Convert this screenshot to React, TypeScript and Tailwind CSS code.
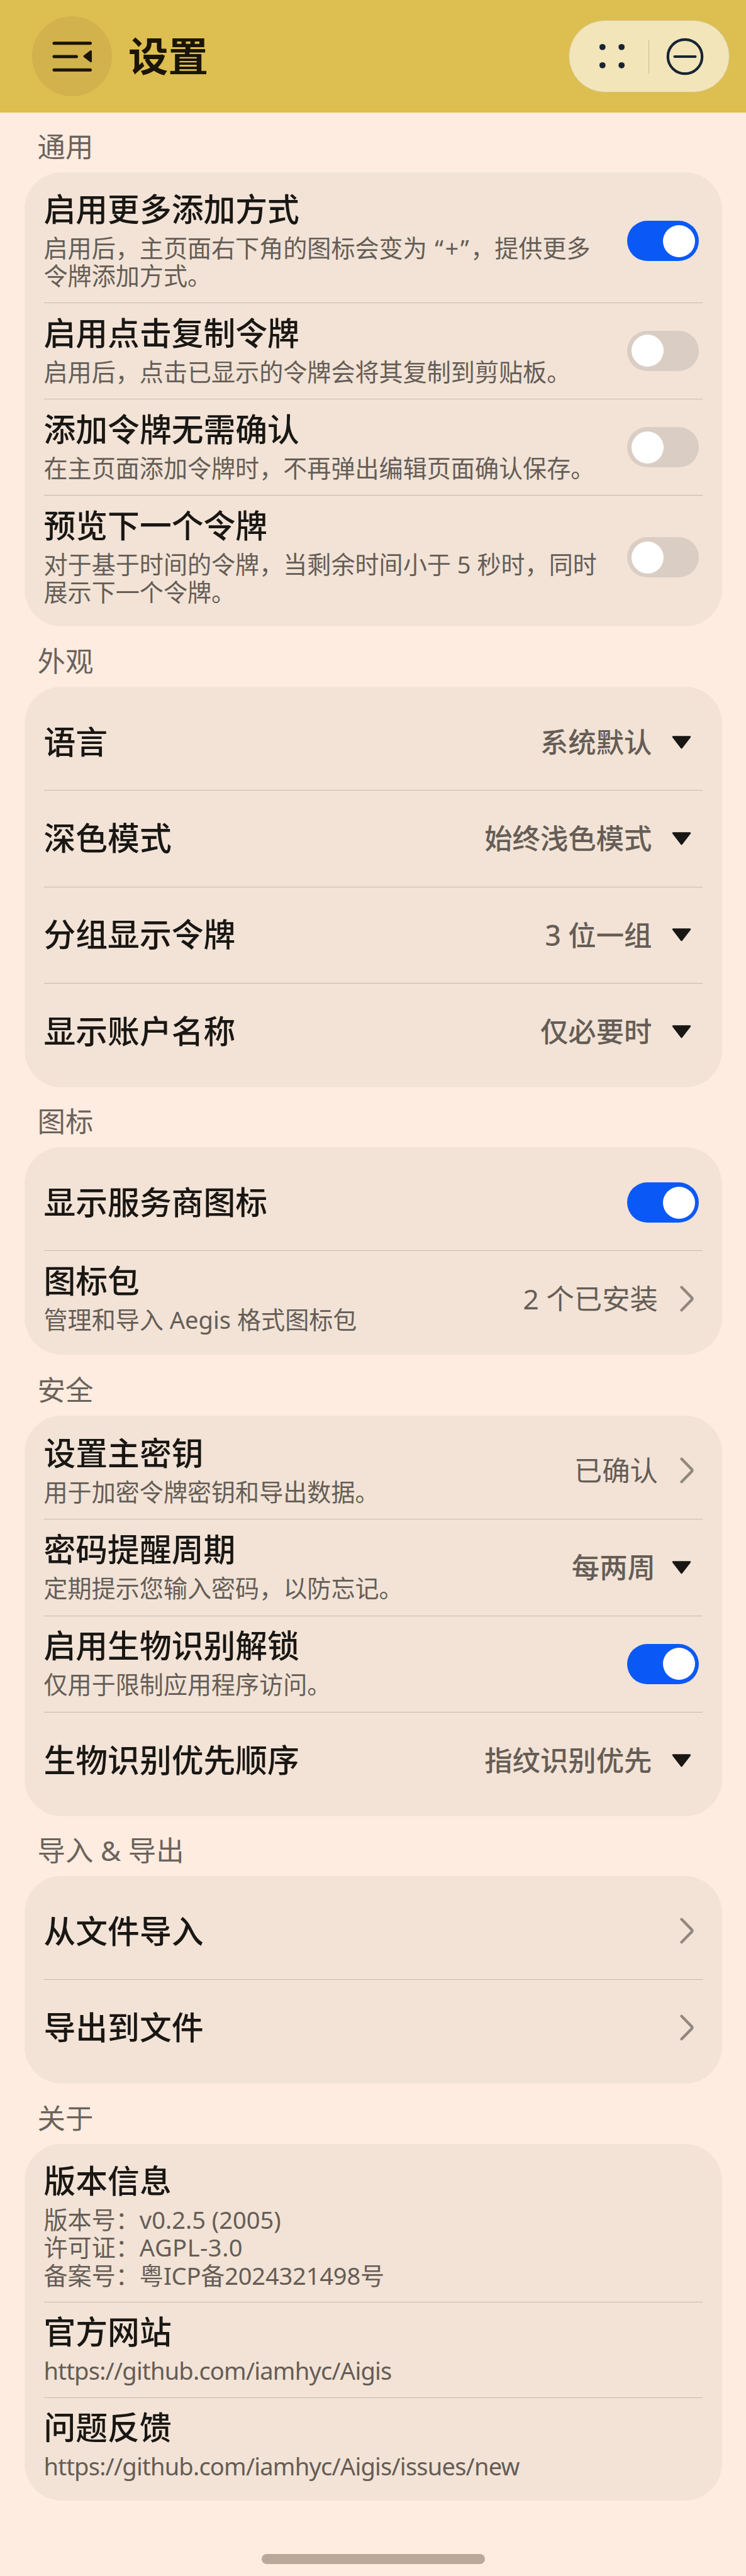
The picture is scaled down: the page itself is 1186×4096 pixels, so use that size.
import React from "react";

type Control =
  | { kind: "switch"; on: boolean }
  | { kind: "select"; value: string; tight?: boolean }
  | { kind: "link"; value?: string }
  | { kind: "none" };

interface Item {
  title: string;
  lines?: React.ReactNode[];
  control: Control;
  size: string;
}

interface Group {
  label: string;
  labelSize: string;
  items: Item[];
}

const ROW = "h-[153.25px]";
const ROW_EVEN = "h-[153px]";
const ROW_TALL = "h-[195.75px]";

const groups: Group[] = [
  {
    label: "通用",
    labelSize: "h-[95px]",
    items: [
      {
        title: "启用更多添加方式",
        lines: [
          <>
            启用后，主页面右下角的图标会变为<span className="tracking-[2.6px]"> “+”</span>，提供更多
          </>,
          "令牌添加方式。",
        ],
        control: { kind: "switch", on: true },
        size: ROW_TALL,
      },
      {
        title: "启用点击复制令牌",
        lines: ["启用后，点击已显示的令牌会将其复制到剪贴板。"],
        control: { kind: "switch", on: false },
        size: ROW,
      },
      {
        title: "添加令牌无需确认",
        lines: ["在主页面添加令牌时，不再弹出编辑页面确认保存。"],
        control: { kind: "switch", on: false },
        size: ROW,
      },
      {
        title: "预览下一个令牌",
        lines: ["对于基于时间的令牌，当剩余时间小于 5 秒时，同时", "展示下一个令牌。"],
        control: { kind: "switch", on: false },
        size: ROW_TALL,
      },
    ],
  },
  {
    label: "外观",
    labelSize: "h-[96px]",
    items: [
      { title: "语言", control: { kind: "select", value: "系统默认" }, size: ROW },
      { title: "深色模式", control: { kind: "select", value: "始终浅色模式" }, size: ROW },
      { title: "分组显示令牌", control: { kind: "select", value: "3 位一组" }, size: ROW },
      { title: "显示账户名称", control: { kind: "select", value: "仅必要时" }, size: ROW },
    ],
  },
  {
    label: "图标",
    labelSize: "h-[95px]",
    items: [
      { title: "显示服务商图标", control: { kind: "switch", on: true }, size: ROW_EVEN },
      {
        title: "图标包",
        lines: ["管理和导入 Aegis 格式图标包"],
        control: { kind: "link", value: "2 个已安装" },
        size: ROW_EVEN,
      },
    ],
  },
  {
    label: "安全",
    labelSize: "h-[97px]",
    items: [
      {
        title: "设置主密钥",
        lines: ["用于加密令牌密钥和导出数据。"],
        control: { kind: "link", value: "已确认" },
        size: ROW,
      },
      {
        title: "密码提醒周期",
        lines: ["定期提示您输入密码，以防忘记。"],
        control: { kind: "select", value: "每两周", tight: true },
        size: ROW,
      },
      {
        title: "启用生物识别解锁",
        lines: ["仅用于限制应用程序访问。"],
        control: { kind: "switch", on: true },
        size: ROW,
      },
      { title: "生物识别优先顺序", control: { kind: "select", value: "指纹识别优先" }, size: ROW },
    ],
  },
  {
    label: "导入 & 导出",
    labelSize: "h-[95px]",
    items: [
      { title: "从文件导入", control: { kind: "link" }, size: ROW_EVEN },
      { title: "导出到文件", control: { kind: "link" }, size: ROW_EVEN },
    ],
  },
  {
    label: "关于",
    labelSize: "h-[96px]",
    items: [
      {
        title: "版本信息",
        lines: [
          "版本号：v0.2.5 (2005)",
          <>
            许可证：<span className="tracking-[0.5px]">AGPL-3.0</span>
          </>,
          <>
            备案号：粤<span className="tracking-[-0.2px]">ICP备2024321498</span>号
          </>,
        ],
        control: { kind: "none" },
        size: "h-[240px]",
      },
      {
        title: "官方网站",
        lines: [<span className="tracking-[-0.8px]">https://github.com/iamhyc/Aigis</span>],
        control: { kind: "none" },
        size: "h-[151.5px]",
      },
      {
        title: "问题反馈",
        lines: [<span className="tracking-[-0.8px]">https://github.com/iamhyc/Aigis/issues/new</span>],
        control: { kind: "none" },
        size: "h-[151.5px]",
      },
    ],
  },
];

function Switch({ on }: { on: boolean }) {
  return (
    <div
      className={`flex h-16 w-[114px] items-center rounded-full px-[6.5px] ${
        on ? "justify-end bg-[#0a59f7]" : "justify-start bg-[#dacdc4]"
      }`}
    >
      <div className="size-[51px] rounded-full bg-white" />
    </div>
  );
}

function ControlView({ control }: { control: Control }) {
  if (control.kind === "switch") {
    return (
      <div className="mr-[6px]">
        <Switch on={control.on} />
      </div>
    );
  }
  if (control.kind === "select") {
    return (
      <div className={`mr-[18px] flex items-center ${control.tight ? "gap-[26px]" : "gap-[31.5px]"}`}>
        <span className="text-[44.4px] leading-[52px] font-medium text-[#655d56]">{control.value}</span>
        <svg className="h-[21px] w-[31px]" viewBox="0 0 31 21">
          <path d="M2.2 1.7H28.8L15.5 18.8Z" fill="#191714" stroke="#191714" strokeWidth="3" strokeLinejoin="round" />
        </svg>
      </div>
    );
  }
  if (control.kind === "link") {
    return (
      <div className="mr-[14px] flex items-center gap-[35px]">
        {control.value && (
          <span className="-mt-[2px] text-[44.4px] leading-[52px] text-[#655d56]">{control.value}</span>
        )}
        <svg className="-mt-[2px] h-[42px] w-[22px]" viewBox="0 0 22 42" fill="none">
          <path
            d="M2.6 2.8L18.8 19.4Q20.2 21 18.8 22.6L2.6 39.2"
            stroke="#93887e"
            strokeWidth="4.4"
            strokeLinecap="round"
            strokeLinejoin="round"
          />
        </svg>
      </div>
    );
  }
  return null;
}

function Row({ item, last }: { item: Item; last: boolean }) {
  return (
    <div
      className={`flex items-center justify-between ${item.size} ${last ? "" : "border-b border-[#c8b9ac]"}`}
    >
      <div className={item.lines ? "pb-[3px]" : "pb-px"}>
        <div className="text-[50.8px] leading-[60px] font-medium whitespace-nowrap text-[#191714]">
          {item.title}
        </div>
        {item.lines && (
          <div className="mt-[9px] text-[38.1px] leading-[44.5px] whitespace-nowrap text-[#655d56]">
            {item.lines.map((line, i) => (
              <div key={i}>{line}</div>
            ))}
          </div>
        )}
      </div>
      <ControlView control={item.control} />
    </div>
  );
}

function Header() {
  return (
    <header className="flex h-[179px] items-center bg-[#ddbe50] pr-[26px] pl-[51px]">
      <div className="flex size-[127px] items-center justify-center rounded-full bg-[#d2b24c]">
        <svg className="h-[50px] w-[64px]" viewBox="0 0 64 50">
          <path d="M3 3.8H60.5M3 25H38.5M3 46.2H60.5" stroke="#1a1505" strokeWidth="5" strokeLinecap="round" />
          <path d="M61.5 16.5V32.5L51 24.5Z" fill="#1a1505" stroke="#1a1505" strokeWidth="3" strokeLinejoin="round" />
        </svg>
      </div>
      <h1 className="ml-[26px] pb-px text-[63.5px] leading-[76px] font-bold text-[#1a1505]">设置</h1>
      <div className="ml-auto flex h-[115px] w-[256px] items-center rounded-full border border-[#d3c48a] bg-[#f1e5b9]">
        <svg className="size-full" viewBox="0 0 254 113">
          <g fill="#182431">
            <circle cx="52.8" cy="41.8" r="4.9" />
            <circle cx="83.2" cy="41.8" r="4.9" />
            <circle cx="52.8" cy="70.8" r="4.9" />
            <circle cx="83.2" cy="70.8" r="4.9" />
          </g>
          <path d="M126.5 31V84" stroke="#c9bd95" strokeWidth="1" />
          <circle cx="184" cy="57" r="27.2" fill="none" stroke="#182431" strokeWidth="4.2" />
          <path d="M167.6 57H200.4" stroke="#182431" strokeWidth="4.2" strokeLinecap="round" />
        </svg>
      </div>
    </header>
  );
}

export default function App() {
  return (
    <div className="flex h-[4096px] w-[1186px] flex-col bg-[#ffece0] font-['Noto_Sans','Noto_Sans_CJK_SC',sans-serif]">
      <Header />
      <main className="pr-[38px] pl-[38.5px]">
        {groups.map((group) => (
          <section key={group.label}>
            <h2
              className={`flex items-end pb-[15px] pl-[21px] text-[44.4px] leading-[52px] text-[#6b635c] ${group.labelSize}`}
            >
              {group.label}
            </h2>
            <div className="rounded-[59px] bg-[#f2e3d6] py-3 pr-[31px] pl-[31px]">
              {group.items.map((item, i) => (
                <Row key={item.title} item={item} last={i === group.items.length - 1} />
              ))}
            </div>
          </section>
        ))}
      </main>
      <div className="mt-auto mb-[19px] h-4 w-[355px] self-center rounded-full bg-[#baa89b]" />
    </div>
  );
}
